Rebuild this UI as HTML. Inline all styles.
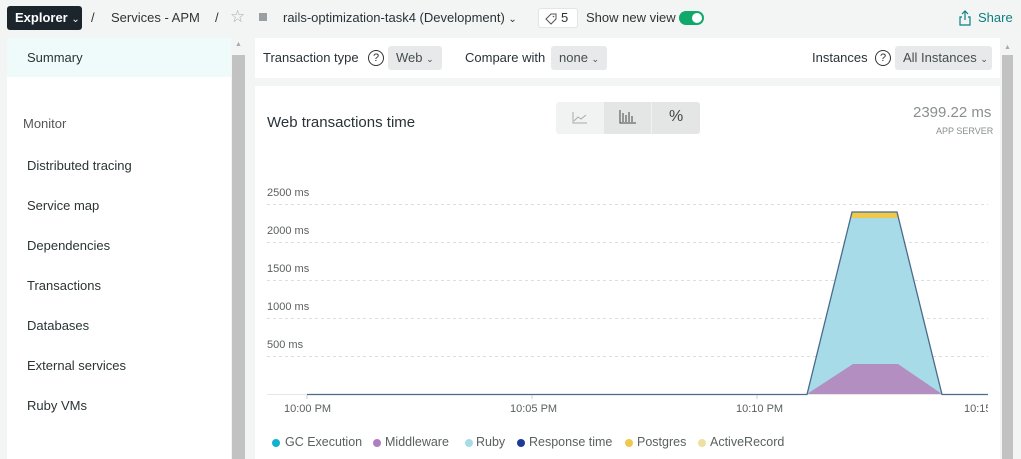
<!DOCTYPE html>
<html><head><style>
*{margin:0;padding:0;box-sizing:border-box}
body{width:1021px;height:459px;overflow:hidden;background:#f3f4f4;font-family:"Liberation Sans",sans-serif;color:#293338;position:relative;font-size:13px}
.a{position:absolute;white-space:nowrap}
.nav{font-size:13px;color:#2a3434}
.btn{background:#e7e9ea;border-radius:3px;color:#464e4e;font-size:13px;padding:0 8px;height:24px;line-height:24px}
.q{width:16px;height:16px;border:1.3px solid #333;border-radius:50%;font-size:11px;text-align:center;line-height:14px}
.lbl{font-size:11px;color:#5b6060}
.lg{font-size:12.5px;color:#5b6060;top:435px}
.dot{position:absolute;top:439px;width:8px;height:8px;border-radius:50%}
</style></head><body>
<div class="a" style="left:7px;top:6px;width:75px;height:24px;background:#1d252c;border-radius:3px;color:#fff;font-weight:bold;font-size:13px;line-height:24px;padding-left:8px">Explorer <span style="font-weight:normal;font-size:10px">⌄</span></div>
<div class="a" style="left:91px;top:10px;color:#333">/</div>
<div class="a" style="left:111px;top:10px;color:#333">Services - APM</div>
<div class="a" style="left:215px;top:10px;color:#333">/</div>
<div class="a" style="left:230px;top:7px;color:#aaa;font-size:17px">☆</div>
<div class="a" style="left:259px;top:13px;width:8px;height:8px;background:#9a9fa1"></div>
<div class="a" style="left:283px;top:10px;color:#293338">rails-optimization-task4 (Development) <span style="font-size:10px">⌄</span></div>
<div class="a" style="left:538px;top:8px;width:40px;height:20px;background:#fff;border:1px solid #e3e4e4;border-radius:3px;font-size:13px;line-height:18px;padding-left:22px">5
<svg style="position:absolute;left:6px;top:4px" width="12" height="12" viewBox="0 0 12 12"><path d="M1 6 L6 1 H11 V6 L6 11 Z" fill="none" stroke="#555" stroke-width="1"/><circle cx="8.5" cy="3.5" r="0.8" fill="#555"/></svg></div>
<div class="a" style="left:586px;top:10px;color:#333">Show new view</div>
<div class="a" style="left:679px;top:11px;width:25px;height:14px;background:#11a86b;border-radius:7px"><div style="position:absolute;right:2px;top:2px;width:10px;height:10px;border-radius:50%;background:#fff"></div></div>
<svg class="a" style="left:958px;top:10px" width="14" height="16" viewBox="0 0 14 16"><path d="M7 1 V10 M4 4 L7 1 L10 4 M4 7 H2 V15 H12 V7 H10" fill="none" stroke="#0b7f80" stroke-width="1.2"/></svg>
<div class="a" style="left:978px;top:10px;color:#0b7f80">Share</div>
<div class="a" style="left:7px;top:38px;width:224px;height:421px;background:#fff"></div>
<div class="a" style="left:7px;top:38px;width:224px;height:39px;background:#effbfb"></div>
<div class="a nav" style="left:27px;top:50px">Summary</div>
<div class="a nav" style="left:23px;top:116px;color:#555">Monitor</div>
<div class="a nav" style="left:27px;top:158px">Distributed tracing</div>
<div class="a nav" style="left:27px;top:198px">Service map</div>
<div class="a nav" style="left:27px;top:238px">Dependencies</div>
<div class="a nav" style="left:27px;top:278px">Transactions</div>
<div class="a nav" style="left:27px;top:318px">Databases</div>
<div class="a nav" style="left:27px;top:358px">External services</div>
<div class="a nav" style="left:27px;top:398px">Ruby VMs</div>
<div class="a" style="left:232px;top:55px;width:13px;height:404px;background:#c2c2c2"></div>
<div class="a" style="left:235px;top:41px;color:#aaa;font-size:7px">▲</div>
<div class="a" style="left:255px;top:38px;width:745px;height:40px;background:#fff"></div>
<div class="a" style="left:263px;top:50px;color:#293338">Transaction type</div>
<div class="a q" style="left:368px;top:50px">?</div>
<div class="a btn" style="left:388px;top:46px">Web <span style="font-size:9px">⌄</span></div>
<div class="a" style="left:465px;top:50px">Compare with</div>
<div class="a btn" style="left:551px;top:46px">none <span style="font-size:9px">⌄</span></div>
<div class="a" style="left:812px;top:50px">Instances</div>
<div class="a q" style="left:875px;top:50px">?</div>
<div class="a btn" style="left:895px;top:46px;width:97px">All Instances <span style="font-size:9px">⌄</span></div>
<div class="a" style="left:1002px;top:55px;width:11px;height:404px;background:#c2c2c2"></div>
<div class="a" style="left:1004px;top:44px;color:#aaa;font-size:7px">▲</div>
<div class="a" style="left:255px;top:86px;width:745px;height:373px;background:#fff"></div>
<div class="a" style="left:267px;top:114px;font-size:15px;color:#293338">Web transactions time</div>
<div class="a" style="left:556px;top:102px;width:48px;height:32px;background:#f1f2f2;border-radius:3px 0 0 3px"></div>
<svg class="a" style="left:572px;top:112px" width="16" height="12" viewBox="0 0 16 12"><path d="M1 0 V11 H15 M2 9 L6 5 L9 7 L14 3" fill="none" stroke="#aaa" stroke-width="1"/></svg>
<div class="a" style="left:604px;top:102px;width:96px;height:32px;background:#e4e6e6;border-radius:0 3px 3px 0"></div>
<div class="a" style="left:651px;top:102px;width:1px;height:32px;background:#f1f2f2"></div>
<svg class="a" style="left:619px;top:110px" width="18" height="14" viewBox="0 0 18 14"><path d="M1 0 V13 H17 M4 3 V12 M7 5 V12 M10 2 V12 M13 6 V12" fill="none" stroke="#444" stroke-width="1"/></svg>
<div class="a" style="left:669px;top:108px;font-size:16px;color:#444">%</div>
<div class="a" style="left:913px;top:104px;font-size:15px;color:#8a8f90">2399.22 ms</div>
<div class="a" style="left:936px;top:126px;font-size:9px;color:#8a8f90">APP SERVER</div>
<div class="a lbl" style="left:267px;top:187px">2500 ms</div>
<div class="a lbl" style="left:267px;top:225px">2000 ms</div>
<div class="a lbl" style="left:267px;top:263px">1500 ms</div>
<div class="a lbl" style="left:267px;top:301px">1000 ms</div>
<div class="a lbl" style="left:267px;top:339px">500 ms</div>
<svg class="a" style="left:255px;top:190px" width="745" height="220" viewBox="255 190 745 220">
<g stroke="#ddd" stroke-dasharray="3,3" stroke-width="1">
<line x1="267" y1="204.5" x2="988" y2="204.5"/><line x1="267" y1="242.5" x2="988" y2="242.5"/><line x1="267" y1="280.5" x2="988" y2="280.5"/><line x1="267" y1="318.5" x2="988" y2="318.5"/><line x1="267" y1="356.5" x2="988" y2="356.5"/></g>
<line x1="267" y1="394.5" x2="988" y2="394.5" stroke="#e6e6e6"/>
<polygon points="807,394 852,212 897,212 942,394" fill="#a7dbe8"/>
<polygon points="852,212 897,212 898,218 851,218" fill="#efc94c"/>
<polygon points="807,394 853,364 898,364 942,394" fill="#b28fc0"/>
<polyline points="307,394.5 807,394.5 852,212 897,212 942,394.5 988,394.5" fill="none" stroke="#4b6a8c" stroke-width="1.3"/>
<g stroke="#ccc"><line x1="307" y1="395" x2="307" y2="399"/><line x1="532" y1="395" x2="532" y2="399"/><line x1="757" y1="395" x2="757" y2="399"/></g>
</svg>
<div class="a lbl" style="left:284px;top:403px">10:00 PM</div>
<div class="a lbl" style="left:510px;top:403px">10:05 PM</div>
<div class="a lbl" style="left:736px;top:403px">10:10 PM</div>
<div class="a lbl" style="left:964px;top:403px;width:24px;overflow:hidden">10:15</div>
<span class="dot" style="left:272px;background:#11b1d1"></span><div class="a lg" style="left:285px">GC Execution</div>
<span class="dot" style="left:373px;background:#ad7fbf"></span><div class="a lg" style="left:385px">Middleware</div>
<span class="dot" style="left:465px;background:#a7dbe8"></span><div class="a lg" style="left:476px">Ruby</div>
<span class="dot" style="left:517px;background:#1f3a99"></span><div class="a lg" style="left:529px">Response time</div>
<span class="dot" style="left:625px;background:#efc94c"></span><div class="a lg" style="left:637px">Postgres</div>
<span class="dot" style="left:698px;background:#eee0a0"></span><div class="a lg" style="left:710px">ActiveRecord</div>
</body></html>
